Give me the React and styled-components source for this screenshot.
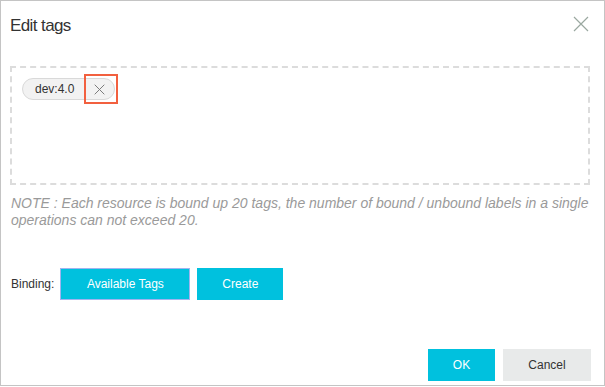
import styled, { createGlobalStyle } from 'styled-components';

const GlobalStyle = createGlobalStyle`
  html, body {
    margin: 0;
    padding: 0;
    background: #ffffff;
  }
  body {
    font-family: "Liberation Sans", Arial, sans-serif;
    color: #333333;
  }
`;

const Dialog = styled.div`
  box-sizing: border-box;
  width: 605px;
  height: 386px;
  border: 1px solid #c4c4c4;
  background: #ffffff;
  display: flex;
  flex-direction: column;
  padding: 0 13px 3px 9px;
`;

const Header = styled.div`
  display: flex;
  align-items: center;
  justify-content: space-between;
  height: 46px;
  padding-right: 2px;
`;

const Title = styled.h2`
  margin: 0;
  padding-top: 3px;
  font-size: 17px;
  font-weight: normal;
  color: #333333;
  letter-spacing: -0.6px;
`;

const CloseButton = styled.button`
  border: none;
  background: none;
  padding: 0;
  width: 16px;
  height: 16px;
  display: flex;
  align-items: center;
  justify-content: center;
  cursor: pointer;
`;

const TagBox = styled.div`
  box-sizing: border-box;
  width: 580px;
  height: 119px;
  margin-top: 19px;
  border: 2px dashed #dcdcdc;
  padding: 10px;
  display: flex;
  align-items: flex-start;
`;

const Tag = styled.div`
  position: relative;
  display: flex;
  align-items: center;
  height: 22px;
  box-sizing: border-box;
  border: 1px solid #d9d9d9;
  border-radius: 11px;
  background: #f2f2f2;
  font-size: 12px;
  color: #333333;
`;

const TagLabel = styled.span`
  padding: 0 10px 0 12px;
  line-height: 20px;
`;

const TagRemove = styled.span`
  position: relative;
  display: flex;
  align-items: center;
  justify-content: center;
  width: 30px;
  height: 20px;
`;

const Highlight = styled.span`
  position: absolute;
  left: 0;
  top: -5px;
  width: 34px;
  height: 30px;
  box-sizing: border-box;
  border: 2px solid #f2603f;
`;

const Note = styled.p`
  margin: 10px 0 0 1px;
  font-size: 14px;
  font-style: italic;
  line-height: 17px;
  color: #9a9a9a;
`;

const BindingRow = styled.div`
  display: flex;
  align-items: center;
  gap: 7px;
  margin-top: 39px;
  margin-left: 1px;
`;

const BindingLabel = styled.span`
  font-size: 12px;
  color: #333333;
  margin-right: -1px;
`;

const Button = styled.button`
  box-sizing: border-box;
  height: 32px;
  min-width: ${(p) => p.$width}px;
  padding: 0 16px;
  border: 1px solid ${(p) => (p.$focus ? '#9fb4f0' : p.$secondary ? '#e8eaea' : '#00c1de')};
  background: ${(p) => (p.$secondary ? '#e8eaea' : '#00c1de')};
  color: ${(p) => (p.$secondary ? '#333333' : '#ffffff')};
  font-family: "Liberation Sans", Arial, sans-serif;
  font-size: 12px;
  cursor: pointer;
`;

const Footer = styled.div`
  margin-top: auto;
  display: flex;
  justify-content: flex-end;
  gap: 8px;
  padding-bottom: 1px;
`;

const CloseIcon = ({ size, color, width }) => (
  <svg width={size} height={size} viewBox="0 0 16 16">
    <path d="M1 1 L15 15 M15 1 L1 15" stroke={color} strokeWidth={width} fill="none" />
  </svg>
);

export default function App() {
  return (
    <>
      <GlobalStyle />
      <Dialog>
        <Header>
          <Title>Edit tags</Title>
          <CloseButton aria-label="close">
            <CloseIcon size={16} color="#9aa8a0" width={1.2} />
          </CloseButton>
        </Header>
        <TagBox>
          <Tag>
            <TagLabel>dev:4.0</TagLabel>
            <TagRemove>
              <CloseIcon size={11} color="#777777" width={1.4} />
              <Highlight />
            </TagRemove>
          </Tag>
        </TagBox>
        <Note>
          NOTE : Each resource is bound up 20 tags, the number of bound / unbound labels in a single
          operations can not exceed 20.
        </Note>
        <BindingRow>
          <BindingLabel>Binding:</BindingLabel>
          <Button $width={130} $focus>Available Tags</Button>
          <Button $width={86}>Create</Button>
        </BindingRow>
        <Footer>
          <Button $width={67}>OK</Button>
          <Button $width={88} $secondary>Cancel</Button>
        </Footer>
      </Dialog>
    </>
  );
}
